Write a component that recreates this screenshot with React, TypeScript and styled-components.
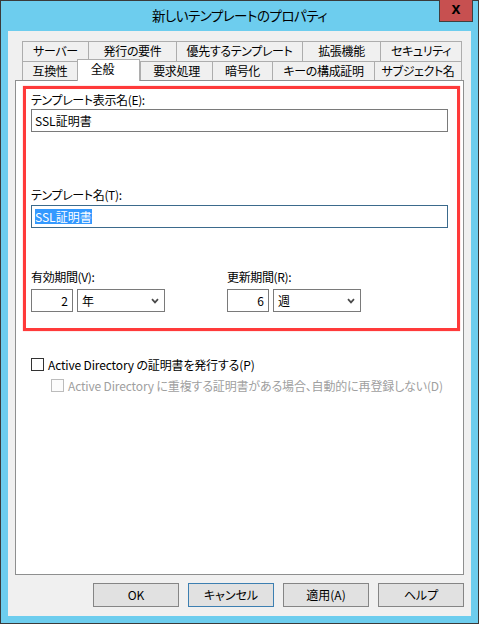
import React from 'react';
import styled, { createGlobalStyle, css } from 'styled-components';

const FONT = `"Noto Sans CJK JP", "Noto Sans", sans-serif`;

const Global = createGlobalStyle`
  html, body { margin: 0; padding: 0; }
  body {
    font-family: ${FONT};
    font-size: 12px;
    color: #000;
    font-feature-settings: "palt" 1;
  }
  * { box-sizing: border-box; }
`;

const Window = styled.div`
  width: 479px;
  height: 624px;
  background: #6dcdee;
  border: 1px solid #3a3a3a;
  display: flex;
  flex-direction: column;
`;

const TitleBar = styled.div`
  height: 30px;
  display: grid;
  grid-template-columns: 1fr auto 1fr;
  align-items: start;
`;

const Title = styled.div`
  grid-column: 2;
  font-size: 13.5px;
  letter-spacing: -0.5px;
  line-height: 28px;
  color: #000;
  white-space: nowrap;
`;

const CloseButton = styled.div`
  grid-column: 3;
  justify-self: end;
  margin-top: -1px;
  margin-right: 5px;
  width: 34px;
  height: 22px;
  background: #c75050;
  border: 1px solid #3f3f3f;
  border-top: none;
  display: flex;
  align-items: center;
  justify-content: center;
  font-family: "Liberation Sans", Arial, sans-serif;
  font-weight: bold;
  font-size: 16px;
  line-height: 1;
  padding-bottom: 4px;
  color: #000;
`;

const Client = styled.div`
  margin: 0 7px 7px 7px;
  flex: 1;
  background: #f0f0f0;
  padding: 10px 7px 9px 7px;
  display: flex;
  flex-direction: column;
`;

const TabStrip = styled.div`
  margin-left: 7px;
  width: 440px;
  display: flex;
  flex-direction: column;
`;

const TabRow = styled.div<{ $h: number }>`
  display: flex;
  height: ${(p) => p.$h}px;
  align-items: flex-start;
`;

const Tab = styled.div<{ $w: number; $active?: boolean; $last?: boolean }>`
  width: ${(p) => p.$w}px;
  height: 100%;
  border-top: 1px solid #adadad;
  border-left: 1px solid #adadad;
  ${(p) => (p.$last ? 'border-right: 1px solid #adadad;' : '')}
  background: #f0f0f0;
  display: flex;
  align-items: center;
  justify-content: center;
  white-space: nowrap;
  letter-spacing: -0.35px;
  line-height: 16px;
  padding-bottom: 1px;
  ${(p) =>
    p.$active &&
    css`
      position: relative;
      z-index: 2;
      background: #fff;
      height: 22px;
      margin-top: -2px;
      border-right: 1px solid #adadad;
      padding-right: 12px;
      padding-bottom: 3px;
    `}
`;

const Panel = styled.div`
  width: 449px;
  height: 495px;
  background: #fff;
  border: 1px solid #8e8f8f;
  padding: 5px 0 0 7px;
  display: flex;
  flex-direction: column;
`;

const Highlight = styled.div`
  width: 437px;
  height: 245px;
  border: 3px solid #ff3a3a;
  box-shadow: 0 0 1px 0 rgba(255, 90, 90, 0.7);
  padding: 3px 0 0 5px;
  display: flex;
  flex-direction: column;
`;

const Label = styled.div<{ $mt?: number }>`
  margin-top: ${(p) => p.$mt ?? 0}px;
  height: 16px;
  line-height: 16px;
  letter-spacing: -0.35px;
  white-space: nowrap;
`;

const TextBox = styled.div<{ $mt?: number; $focused?: boolean }>`
  margin-top: ${(p) => p.$mt ?? 0}px;
  width: 417px;
  height: 23px;
  background: #fff;
  border: 1px solid ${(p) => (p.$focused ? '#3b6a8c' : '#7a7a7a')};
  padding-left: 3px;
  display: flex;
  align-items: center;
  white-space: nowrap;
`;

const Selected = styled.span`
  background: #3399ff;
  color: #fff;
  line-height: 15px;
`;

const PeriodLabels = styled.div`
  margin-top: 41px;
  height: 16px;
  line-height: 16px;
  letter-spacing: -0.35px;
  display: grid;
  grid-template-columns: 196px auto;
  white-space: nowrap;
`;

const PeriodRow = styled.div`
  margin-top: 4px;
  display: grid;
  grid-template-columns: 196px auto;
`;

const PeriodGroup = styled.div`
  display: flex;
  gap: 4px;
`;

const NumberBox = styled.div`
  width: 42px;
  height: 23px;
  border: 1px solid #7a7a7a;
  background: #fff;
  padding-right: 4px;
  display: flex;
  align-items: center;
  justify-content: flex-end;
`;

const Combo = styled.div`
  width: 88px;
  height: 23px;
  border: 1px solid #7a7a7a;
  background: #fff;
  padding: 0 5px 0 4px;
  display: flex;
  align-items: center;
  justify-content: space-between;
`;

const CheckRow = styled.div<{ $indent: number; $mt: number; $disabled?: boolean }>`
  margin-top: ${(p) => p.$mt}px;
  margin-left: ${(p) => p.$indent}px;
  height: 16px;
  display: flex;
  align-items: center;
  gap: 4px;
  white-space: nowrap;
  letter-spacing: -0.15px;
  color: ${(p) => (p.$disabled ? '#a0a0a0' : '#000')};
`;

const CheckBox = styled.span<{ $disabled?: boolean }>`
  width: 13px;
  height: 13px;
  flex: none;
  background: ${(p) => (p.$disabled ? '#fcfcfc' : '#fff')};
  border: 1px solid ${(p) => (p.$disabled ? '#bcbcbc' : '#333')};
`;

const ButtonRow = styled.div`
  margin-top: 8px;
  display: flex;
  justify-content: flex-end;
  gap: 9px;
`;

const Button = styled.div<{ $focused?: boolean }>`
  width: 86px;
  height: 24px;
  background: #e1e1e1;
  border: 1px solid ${(p) => (p.$focused ? '#3c7fb1' : '#858585')};
  display: flex;
  align-items: center;
  justify-content: center;
  line-height: 16px;
`;

const Chevron = () => (
  <svg width="8" height="6" viewBox="0 0 8 6">
    <path d="M1 1.2 L4 4.4 L7 1.2" fill="none" stroke="#4a4a4a" strokeWidth="1.7" />
  </svg>
);

const row1 = [
  { label: 'サーバー', w: 66 },
  { label: '発行の要件', w: 88 },
  { label: '優先するテンプレート', w: 126 },
  { label: '拡張機能', w: 78 },
  { label: 'セキュリティ', w: 82 },
];

const row2 = [
  { label: '互換性', w: 55 },
  { label: '全般', w: 63, active: true },
  { label: '要求処理', w: 72 },
  { label: '暗号化', w: 60 },
  { label: 'キーの構成証明', w: 102 },
  { label: 'サブジェクト名', w: 88 },
];

const periods = [
  { value: '2', unit: '年' },
  { value: '6', unit: '週' },
];

export default function App() {
  return (
    <>
      <Global />
      <Window>
        <TitleBar>
          <Title>新しいテンプレートのプロパティ</Title>
          <CloseButton>x</CloseButton>
        </TitleBar>
        <Client>
          <TabStrip>
            <TabRow $h={20}>
              {row1.map((t, i) => (
                <Tab key={t.label} $w={t.w} $last={i === row1.length - 1}>
                  {t.label}
                </Tab>
              ))}
            </TabRow>
            <TabRow $h={19}>
              {row2.map((t, i) => (
                <Tab key={t.label} $w={t.w} $active={t.active} $last={i === row2.length - 1}>
                  {t.label}
                </Tab>
              ))}
            </TabRow>
          </TabStrip>
          <Panel>
            <Highlight>
              <Label>テンプレート表示名(E):</Label>
              <TextBox $mt={1}>SSL証明書</TextBox>
              <Label $mt={55}>テンプレート名(T):</Label>
              <TextBox $mt={2} $focused>
                <Selected>SSL証明書</Selected>
              </TextBox>
              <PeriodLabels>
                <span>有効期間(V):</span>
                <span>更新期間(R):</span>
              </PeriodLabels>
              <PeriodRow>
                {periods.map((p) => (
                  <PeriodGroup key={p.unit}>
                    <NumberBox>{p.value}</NumberBox>
                    <Combo>
                      <span>{p.unit}</span>
                      <Chevron />
                    </Combo>
                  </PeriodGroup>
                ))}
              </PeriodRow>
            </Highlight>
            <CheckRow $indent={8} $mt={25}>
              <CheckBox />
              <span>Active Directory の証明書を発行する(P)</span>
            </CheckRow>
            <CheckRow $indent={28} $mt={5} $disabled>
              <CheckBox $disabled />
              <span>Active Directory に重複する証明書がある場合、自動的に再登録しない(D)</span>
            </CheckRow>
          </Panel>
          <ButtonRow>
            <Button>OK</Button>
            <Button $focused>キャンセル</Button>
            <Button>適用(A)</Button>
            <Button>ヘルプ</Button>
          </ButtonRow>
        </Client>
      </Window>
    </>
  );
}
